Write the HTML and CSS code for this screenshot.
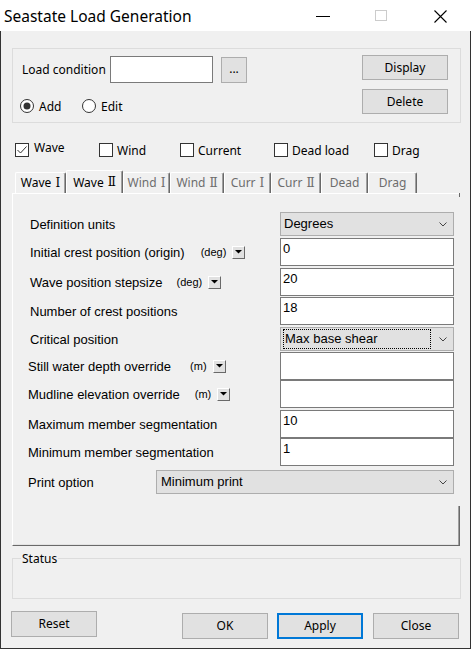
FILE: index.html
```html
<!DOCTYPE html>
<html>
<head>
<meta charset="utf-8">
<title>Seastate Load Generation</title>
<link rel="stylesheet" href="styles.css">
</head>
<body>
<div class="window">
  <div class="titlebar">
    <div class="title">Seastate Load Generation</div>
    <svg class="cap cap-min" width="14" height="14" viewBox="0 0 14 14"><line x1="0" y1="6.5" x2="14" y2="6.5" stroke="#000" stroke-width="1"/></svg>
    <svg class="cap cap-max" width="12" height="12" viewBox="0 0 12 12"><rect x="0.5" y="0.5" width="11" height="10" fill="none" stroke="#cccccc" stroke-width="1"/></svg>
    <svg class="cap cap-close" width="13" height="13" viewBox="0 0 13 13"><path d="M0.5 0.5 L12.5 12.5 M12.5 0.5 L0.5 12.5" stroke="#000" stroke-width="1.1" fill="none"/></svg>
  </div>

  <div class="client">
    <div class="group-top">
      <div class="gt-left">
        <div class="lc-row">
          <span class="ui lc-label">Load condition</span>
          <div class="textbox lc-input"></div>
          <div class="btn btn-dots">...</div>
        </div>
        <div class="radio-row">
          <label class="radio radio-add">
            <svg width="14" height="14" viewBox="0 0 14 14"><circle cx="7" cy="7" r="6.5" fill="#fff" stroke="#333"/><circle cx="7" cy="7" r="3.5" fill="#333"/></svg>
            <span class="ui">Add</span>
          </label>
          <label class="radio">
            <svg width="14" height="14" viewBox="0 0 14 14"><circle cx="7" cy="7" r="6.5" fill="#fff" stroke="#333"/></svg>
            <span class="ui">Edit</span>
          </label>
        </div>
      </div>
      <div class="gt-right">
        <div class="btn btn-side">Display</div>
        <div class="btn btn-side btn-delete">Delete</div>
      </div>
    </div>

    <div class="check-row">
      <label class="check cw-wave">
        <svg width="14" height="14" viewBox="0 0 14 14"><rect x="0.5" y="0.5" width="13" height="13" fill="#fff" stroke="#333"/><path d="M2.5 7 L5.5 10 L11.5 3.5" fill="none" stroke="#333" stroke-width="1"/></svg>
        <span class="ui check-raised">Wave</span>
      </label>
      <label class="check cw-wind">
        <svg width="14" height="14" viewBox="0 0 14 14"><rect x="0.5" y="0.5" width="13" height="13" fill="#fff" stroke="#333"/></svg>
        <span class="ui">Wind</span>
      </label>
      <label class="check cw-current">
        <svg width="14" height="14" viewBox="0 0 14 14"><rect x="0.5" y="0.5" width="13" height="13" fill="#fff" stroke="#333"/></svg>
        <span class="ui">Current</span>
      </label>
      <label class="check cw-dead">
        <svg width="14" height="14" viewBox="0 0 14 14"><rect x="0.5" y="0.5" width="13" height="13" fill="#fff" stroke="#333"/></svg>
        <span class="ui">Dead load</span>
      </label>
      <label class="check">
        <svg width="14" height="14" viewBox="0 0 14 14"><rect x="0.5" y="0.5" width="13" height="13" fill="#fff" stroke="#333"/></svg>
        <span class="ui">Drag</span>
      </label>
    </div>

    <div class="tabs">
      <div class="tab t1">Wave<span class="rn">Ⅰ</span></div>
      <div class="tab tab-active t2">Wave<span class="rn">Ⅱ</span></div>
      <div class="tab tab-off t3">Wind<span class="rn">Ⅰ</span></div>
      <div class="tab tab-off t4">Wind<span class="rn">Ⅱ</span></div>
      <div class="tab tab-off t5">Curr<span class="rn">Ⅰ</span></div>
      <div class="tab tab-off t6">Curr<span class="rn">Ⅱ</span></div>
      <div class="tab tab-off t7">Dead</div>
      <div class="tab tab-off t8">Drag</div>
    </div>

    <div class="panel">
      <div class="row">
        <span class="lbl">Definition units</span>
        <div class="select ctl"><span>Degrees</span><svg class="chev" width="8" height="5" viewBox="0 0 8 5"><path d="M0.5 0.5 L4 4 L7.5 0.5" fill="none" stroke="#444" stroke-width="1"/></svg></div>
      </div>
      <div class="row mt2">
        <span class="lbl">Initial crest position (origin)</span>
        <span class="unit unit-crest">(deg)</span>
        <span class="ubtn"><svg width="7" height="4" viewBox="0 0 7 4"><path d="M0 0 H7 L3.5 3.5 Z" fill="#000"/></svg></span>
        <div class="textbox ctl">0</div>
      </div>
      <div class="row mt2">
        <span class="lbl">Wave position stepsize</span>
        <span class="unit unit-step">(deg)</span>
        <span class="ubtn"><svg width="7" height="4" viewBox="0 0 7 4"><path d="M0 0 H7 L3.5 3.5 Z" fill="#000"/></svg></span>
        <div class="textbox ctl">20</div>
      </div>
      <div class="row mt1">
        <span class="lbl">Number of crest positions</span>
        <div class="textbox ctl">18</div>
      </div>
      <div class="row mt2">
        <span class="lbl">Critical position</span>
        <div class="select ctl"><span class="focus">Max base shear</span><svg class="chev" width="8" height="5" viewBox="0 0 8 5"><path d="M0.5 0.5 L4 4 L7.5 0.5" fill="none" stroke="#444" stroke-width="1"/></svg></div>
      </div>
      <div class="row mt1">
        <span class="lbl lbl2">Still water depth override</span>
        <span class="unit unit-still">(m)</span>
        <span class="ubtn"><svg width="7" height="4" viewBox="0 0 7 4"><path d="M0 0 H7 L3.5 3.5 Z" fill="#000"/></svg></span>
        <div class="textbox ctl"></div>
      </div>
      <div class="row">
        <span class="lbl lbl2">Mudline elevation override</span>
        <span class="unit unit-mud">(m)</span>
        <span class="ubtn"><svg width="7" height="4" viewBox="0 0 7 4"><path d="M0 0 H7 L3.5 3.5 Z" fill="#000"/></svg></span>
        <div class="textbox ctl"></div>
      </div>
      <div class="row mt2">
        <span class="lbl lbl2">Maximum member segmentation</span>
        <div class="textbox ctl">10</div>
      </div>
      <div class="row">
        <span class="lbl lbl2">Minimum member segmentation</span>
        <div class="textbox ctl">1</div>
      </div>
      <div class="row mt4">
        <span class="lbl lbl2 lbl-print">Print option</span>
        <div class="select ctl-wide"><span class="print-val">Minimum print</span><svg class="chev" width="8" height="5" viewBox="0 0 8 5"><path d="M0.5 0.5 L4 4 L7.5 0.5" fill="none" stroke="#444" stroke-width="1"/></svg></div>
      </div>
    </div>

    <div class="status">
      <span class="ui status-label">Status</span>
    </div>

    <div class="bottom-row">
      <div class="btn btn-foot btn-reset">Reset</div>
      <div class="btn btn-foot btn-ok">OK</div>
      <div class="btn btn-foot btn-apply">Apply</div>
      <div class="btn btn-foot btn-close">Close</div>
    </div>
  </div>
</div>
</body>
</html>
```

FILE: styles.css
```css
* { box-sizing: border-box; }
html, body { margin: 0; padding: 0; }
body {
  width: 471px;
  height: 649px;
  background: #f0f0f0;
  font-family: "Noto Sans", "DejaVu Sans", sans-serif;
  font-size: 12px;
  color: #000;
  overflow: hidden;
}
.window { width: 471px; height: 649px; display: flex; flex-direction: column; }

.titlebar {
  height: 31px;
  background: #fff;
  display: flex;
  align-items: flex-start;
  padding-right: 24px;
  flex: none;
}
.title {
  font-size: 15.5px;
  line-height: 20px;
  padding: 6px 0 0 4px;
  flex: 1;
  white-space: nowrap;
}
.cap { display: block; flex: none; }
.cap-min { margin-top: 10px; }
.cap-max { margin-top: 10px; margin-left: 45px; }
.cap-close { margin-top: 10px; margin-left: 47px; }

.client {
  flex: 1;
  background: #f0f0f0;
  border-left: 1px solid #333;
  border-right: 1px solid #333;
  border-bottom: 1px solid #333;
  display: flex;
  flex-direction: column;
}

.ui { font-family: "Noto Sans", "DejaVu Sans", sans-serif; font-size: 12px; white-space: nowrap; }

.btn {
  background: #e1e1e1;
  border: 1px solid #adadad;
  display: flex;
  align-items: center;
  justify-content: center;
  font-size: 12px;
  line-height: 16px;
  white-space: nowrap;
}

/* top group */
.group-top {
  margin: 17px 0 0 11px;
  width: 449px;
  height: 75px;
  border: 1px solid #dcdcdc;
  display: flex;
  padding: 6px 12px 0 9px;
  flex: none;
}
.gt-left { display: flex; flex-direction: column; }
.lc-row { display: flex; align-items: center; margin-top: 1px; height: 27px; }
.lc-label { width: 88px; }
.textbox { background: #fff; border: 1px solid #7a7a7a; }
.lc-input { width: 103px; height: 27px; }
.btn-dots { width: 26px; height: 26px; margin-left: 8px; padding-bottom: 2px; }
.radio-row { display: flex; align-items: center; margin-top: 16px; margin-left: -2px; height: 14px; }
.radio { display: flex; align-items: center; gap: 5px; }
.radio svg { display: block; flex: none; }
.radio-add { width: 62px; }
.gt-right { margin-left: auto; display: flex; flex-direction: column; gap: 9px; }
.btn-side { width: 86px; height: 25px; }

/* checkboxes */
.check-row { display: flex; align-items: center; margin: 19px 0 0 14px; height: 16px; flex: none; }
.check { display: flex; align-items: center; gap: 4px; }
.check svg { display: block; flex: none; }
.cw-wave { width: 84px; }
.cw-wind { width: 81px; }
.cw-current { width: 94px; }
.cw-dead { width: 100px; }
.check-raised { padding-bottom: 5px; margin-left: 1px; }

/* tabs */
.tabs { display: flex; align-items: flex-end; height: 23px; margin: 12px 0 0 14px; flex: none; }
.tab {
  height: 21px;
  border-top: 1px solid #fff;
  border-left: 1px solid #fff;
  border-right: 1px solid #696969;
  box-shadow: inset -1px 0 0 #a0a0a0;
  border-radius: 2px 2px 0 0;
  display: flex;
  align-items: center;
  justify-content: center;
  font-family: "Noto Sans", "DejaVu Sans", sans-serif;
  font-size: 12px;
  white-space: nowrap;
  padding-bottom: 1px;
}
.rn {
  font-family: "DejaVu Serif", "DejaVu Sans", serif;
  font-size: 12px;
  margin-left: 4px;
}
.tab-active { height: 23px; padding-bottom: 0; }
.tab-off { color: #6d6d6d; }
.t1 { width: 51px; }
.t2 { width: 57px; }
.t3 { width: 47px; }
.t4 { width: 54px; }
.t5 { width: 47px; }
.t6 { width: 50px; }
.t7 { width: 47px; }
.t8 { width: 49px; }

/* panel */
.panel {
  position: relative;
  margin-left: 11px;
  width: 448px;
  height: 353px;
  border-top: 1px solid #fff;
  border-left: 1px solid #fff;
  border-bottom: 1px solid #696969;
  box-shadow: inset 0 -1px 0 #e3e3e3;
  padding: 18px 6px 0 17px;
  display: flex;
  flex-direction: column;
  flex: none;
  font-family: "Liberation Sans", Arial, sans-serif;
  font-size: 13px;
}
.panel::before {
  content: "";
  position: absolute;
  right: 0;
  top: -1px;
  width: 1px;
  height: 4px;
  background: #696969;
}
.panel::after {
  content: "";
  position: absolute;
  right: 0;
  bottom: 0;
  width: 1px;
  height: 39px;
  background: #696969;
  box-shadow: -1px 0 0 #a0a0a0;
}
.row { display: flex; align-items: center; }
.mt1 { margin-top: 1px; }
.mt2 { margin-top: 2px; }
.mt4 { margin-top: 4px; }
.lbl { white-space: nowrap; }
.lbl2 { margin-left: -2px; }
.lbl-print { width: 128px; }
.unit { font-size: 11px; white-space: nowrap; }
.unit-crest { margin-left: 16px; }
.unit-step { margin-left: 14px; }
.unit-still { margin-left: 19px; }
.unit-mud { margin-left: 15px; }
.ubtn {
  width: 13px;
  height: 13px;
  margin-left: 6px;
  background: #e1e1e1;
  border-top: 1px solid #fff;
  border-left: 1px solid #fff;
  border-right: 1px solid #696969;
  border-bottom: 1px solid #696969;
  display: flex;
  align-items: center;
  justify-content: center;
}
.ubtn svg { display: block; }
.ctl { margin-left: auto; width: 174px; }
.textbox.ctl { height: 28px; padding: 2px 2px; line-height: 15px; }
.select {
  height: 24px;
  background: #e1e1e1;
  border: 1px solid #adadad;
  display: flex;
  align-items: center;
  padding: 0 6px 0 3px;
  line-height: 16px;
}
.select .chev { margin-left: auto; display: block; flex: none; }
.focus {
  width: 148px;
  height: 20px;
  border: 1px dotted #000;
  margin-left: -1px;
  display: flex;
  align-items: center;
  padding-left: 1px;
}
.ctl-wide { width: 298px; padding-left: 4px; }

/* status */
.status {
  position: relative;
  margin: 12px 0 0 11px;
  width: 449px;
  height: 41px;
  border: 1px solid #dcdcdc;
  flex: none;
}
.status-label {
  position: absolute;
  left: 8px;
  top: -8px;
  padding: 0 1px;
  background: #f0f0f0;
  line-height: 16px;
}

/* bottom buttons */
.bottom-row { display: flex; align-items: flex-start; margin-top: 12px; flex: none; }
.btn-foot { width: 86px; height: 26px; }
.btn-reset { margin-left: 10px; }
.btn-ok { margin-left: 85px; margin-top: 2px; }
.btn-apply { margin-left: 9px; margin-top: 2px; border: 2px solid #0078d7; }
.btn-close { margin-left: 10px; margin-top: 2px; }
```
